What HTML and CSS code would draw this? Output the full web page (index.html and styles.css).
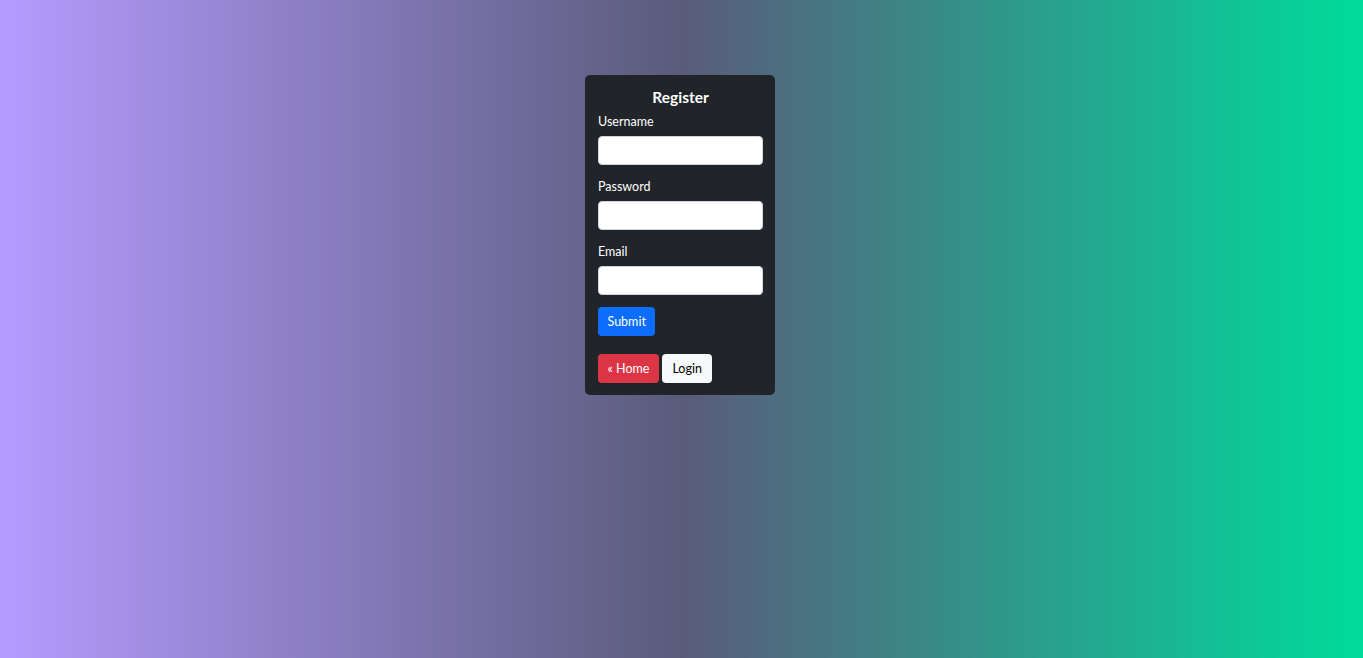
FILE: index.html
```html
<!DOCTYPE html>
<html lang="en">
<head>
<meta charset="utf-8">
<title>Register</title>
<link rel="stylesheet" href="styles.css">
</head>
<body>
<main class="page">
  <div class="card">
    <h1 class="title">Register</h1>
    <form class="form">
      <label class="label" for="u">Username</label>
      <input class="input" id="u" type="text">
      <label class="label" for="p">Password</label>
      <input class="input" id="p" type="password">
      <label class="label" for="e">Email</label>
      <input class="input" id="e" type="email">
      <div class="submit-row"><button type="button" class="btn btn-primary">Submit</button></div>
    </form>
    <div class="links">
      <a class="btn btn-danger" href="#">« Home</a>
      <a class="btn btn-light" href="#">Login</a>
    </div>
  </div>
</main>
</body>
</html>
```
FILE: styles.css
```css
* { box-sizing: border-box; }
html, body { margin: 0; padding: 0; }
body {
  height: 657px;
  background: linear-gradient(90deg, #b49cff 0%, #5a5b7b 50%, #00db9c 100%);
  font-family: "Lato", "Open Sans", sans-serif;
  font-size: 12.5px;
  color: #fff;
}
.page {
  display: flex;
  justify-content: center;
  padding-top: 75px;
  padding-right: 3px;
}
.card {
  width: 190px;
  background: #212529;
  border-radius: 5px;
  padding: 11px 12px 12px 13px;
}
.title {
  margin: 0 0 4px;
  text-align: center;
  font-size: 15.5px;
  font-weight: 700;
  line-height: 22px;
}
.form { display: flex; flex-direction: column; }
.label {
  display: block;
  line-height: 18px;
  margin-top: 1px;
  margin-bottom: 5px;
}
.input {
  display: block;
  width: 165px;
  height: 29px;
  border: 1px solid #ced4da;
  border-radius: 4px;
  background: #fff;
  margin-bottom: 12px;
  font: inherit;
}
.submit-row { margin-bottom: 18px; }
.btn {
  display: inline-block;
  height: 29px;
  padding: 0 9.5px;
  border: 0;
  border-radius: 4px;
  font: inherit;
  line-height: 29px;
  text-decoration: none;
  vertical-align: top;
}
.btn-primary { background: #0d6efd; color: #fff; }
.btn-danger { background: #dc3545; color: #fff; }
.btn-light { background: #f8f9fa; color: #000; margin-left: 3px; padding: 0 10.5px; }
.links { display: flex; }
```
